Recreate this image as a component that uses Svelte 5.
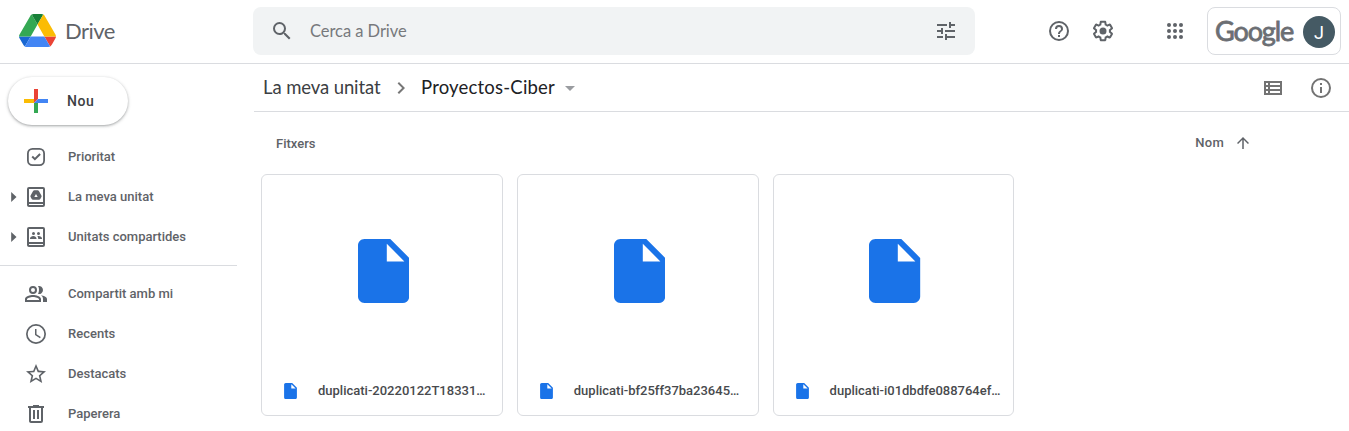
<script>
  const primary = [
    { label: 'Prioritat', icon: 'priority', arrow: false },
    { label: 'La meva unitat', icon: 'drive', arrow: true },
    { label: 'Unitats compartides', icon: 'shared', arrow: true }
  ];
  const secondary = [
    { label: 'Compartit amb mi', icon: 'people' },
    { label: 'Recents', icon: 'clock' },
    { label: 'Destacats', icon: 'star' },
    { label: 'Paperera', icon: 'trash' }
  ];
  const files = ['duplicati-20220122T18331…', 'duplicati-bf25ff37ba23645…', 'duplicati-i01dbdfe088764ef…'];
  const dots = [6, 12, 18];
  const shapes = {
    search: 'M15.5 14h-.79l-.28-.27A6.47 6.47 0 0 0 16 9.5 6.5 6.5 0 1 0 9.5 16c1.61 0 3.09-.59 4.23-1.57l.27.28v.79l5 4.99L20.49 19l-4.99-5zm-6 0a4.5 4.5 0 1 1 0-9 4.5 4.5 0 0 1 0 9z',
    tune: 'M3 17v2h6v-2H3zM3 5v2h10V5H3zm10 16v-2h8v-2h-8v-2h-2v6h2zM7 9v2H3v2h4v2h2V9H7zm14 4v-2H11v2h10zm-6-4h2V7h4V5h-4V3h-2v6z',
    help: 'M11 18h2v-2h-2v2zm1-16a10 10 0 1 0 0 20 10 10 0 0 0 0-20zm0 18a8 8 0 1 1 0-16 8 8 0 0 1 0 16zm0-14a4 4 0 0 0-4 4h2a2 2 0 1 1 4 0c0 2-3 1.75-3 5h2c0-2.25 3-2.5 3-5a4 4 0 0 0-4-4z',
    gear: 'M13.85 22.25h-3.7c-.74 0-1.36-.54-1.45-1.27l-.27-1.89c-.27-.14-.53-.29-.79-.46l-1.8.72c-.7.26-1.47-.03-1.81-.65L2.2 15.53c-.35-.66-.2-1.44.36-1.88l1.53-1.19c-.01-.15-.02-.3-.02-.46 0-.15.01-.31.02-.46l-1.52-1.19c-.59-.45-.74-1.26-.37-1.88l1.85-3.19c.34-.62 1.11-.9 1.79-.63l1.81.73c.26-.17.52-.32.78-.46l.27-1.91c.09-.7.71-1.25 1.44-1.25h3.7c.74 0 1.36.54 1.45 1.27l.27 1.89c.27.14.53.29.79.46l1.8-.72c.71-.26 1.48.03 1.82.65l1.84 3.18c.36.66.2 1.44-.36 1.88l-1.52 1.19c.01.15.02.3.02.46s-.01.31-.02.46l1.52 1.19c.56.45.72 1.23.37 1.86l-1.86 3.22c-.34.62-1.11.9-1.8.63l-1.8-.72c-.26.17-.52.32-.78.46l-.27 1.91c-.1.68-.72 1.22-1.46 1.22zm-3.23-2h2.76l.37-2.55.53-.22c.44-.18.88-.44 1.34-.78l.45-.34 2.38.96 1.38-2.4-2.03-1.58.07-.56c.03-.26.06-.51.06-.78s-.03-.53-.06-.78l-.07-.56 2.03-1.58-1.39-2.4-2.39.96-.45-.35c-.42-.32-.87-.58-1.33-.77l-.52-.22-.37-2.55h-2.76l-.37 2.55-.53.21c-.44.19-.88.44-1.34.79l-.45.33-2.38-.95-1.39 2.39 2.03 1.58-.07.56a7 7 0 0 0-.06.79c0 .26.02.53.06.78l.07.56-2.03 1.58 1.38 2.4 2.39-.96.45.35c.43.33.86.58 1.33.77l.53.22.38 2.55zM12 8.5a3.5 3.5 0 1 0 0 7 3.5 3.5 0 0 0 0-7z',
    list: 'M3 5v14h18V5H3zm4 2v2H5V7h2zm-2 6v-2h2v2H5zm0 2h2v2H5v-2zm14 2H9v-2h10v2zm0-4H9v-2h10v2zm0-4H9V7h10v2z',
    info: 'M11 17h2v-6h-2v6zm1-15a10 10 0 1 0 0 20 10 10 0 0 0 0-20zm0 18a8 8 0 1 1 0-16 8 8 0 0 1 0 16zM11 9h2V7h-2v2z',
    chevron: 'M10 6 8.59 7.41 13.17 12l-4.58 4.59L10 18l6-6z',
    up: 'M4 12l1.41 1.41L11 7.83V20h2V7.83l5.58 5.59L20 12l-8-8-8 8z',
    priority: 'M15.5 3h-7A5.5 5.5 0 0 0 3 8.5v7A5.5 5.5 0 0 0 8.5 21h7a5.5 5.5 0 0 0 5.5-5.5v-7A5.5 5.5 0 0 0 15.5 3zM19.2 15.4a3.8 3.8 0 0 1-3.8 3.8H8.6a3.8 3.8 0 0 1-3.8-3.8V8.6a3.8 3.8 0 0 1 3.8-3.8h6.8a3.8 3.8 0 0 1 3.8 3.8v6.8zM15.4 8.3 10.9 12.8l-2-2-1.4 1.4 3.4 3.4 5.9-5.9z',
    drive: 'M19 2H5a2 2 0 0 0-2 2v16c0 1.1.9 2 2 2h14a2 2 0 0 0 2-2V4a2 2 0 0 0-2-2zm0 18H5v-1h14v1zm0-3H5V4h14v13zM10.4 5.3h3.2c.6 0 1 .2 1.3.7l2.5 4.400c.3.500.3 1 0 1.500l-1.100 2c-.3.500-.7.800-1.300.8H9c-.6 0-1-.3-1.300-.8l-1.100-2c-.3-.5-.3-1 0-1.500L9.100 6c.3-.5.700-.7 1.300-.7zM12 9l-1.700 3h3.400z',
    shared: 'M19 2H5a2 2 0 0 0-2 2v16c0 1.1.9 2 2 2h14a2 2 0 0 0 2-2V4a2 2 0 0 0-2-2zm0 18H5v-1h14v1zm0-3H5V4h14v13zM9.5 10a1.5 1.5 0 1 0 0-3 1.5 1.5 0 0 0 0 3zm5 0a1.5 1.5 0 1 0 0-3 1.5 1.5 0 0 0 0 3zM6 13.5V14h6.5v-.5c0-1.6-1.7-2.5-3.2-2.5S6 11.9 6 13.5zm7.4-2.3c.5.6.8 1.4.8 2.3v.5H18v-.5c0-1.9-2.4-2.8-4.6-2.3z',
    people: 'M9 13c-2.67 0-8 1.34-8 4v3h16v-3c0-2.66-5.33-4-8-4zm6 5H3v-.99C3.2 16.29 6.3 15 9 15s5.8 1.29 6 2v1zM9 12a4 4 0 1 0 0-8 4 4 0 0 0 0 8zm0-6a2 2 0 1 1 0 4 2 2 0 0 1 0-4zm5.04 5.88A4 4 0 1 0 14 4.12 6.5 6.5 0 0 1 15 8c0 1.45-.37 2.8-.96 3.88zM16.97 13.25C18.19 14.13 19 15.32 19 17v3h4v-3c0-2.18-3.58-3.47-6.03-3.75z',
    clock: 'M12 2a10 10 0 1 0 0 20 10 10 0 0 0 0-20zm0 18.3a8.3 8.3 0 1 1 0-16.6 8.3 8.3 0 0 1 0 16.6zM12.5 7H11v6l4.9 3.3.9-1.4-4.3-2.7z',
    star: 'm22 9.24-7.19-.62L12 2 9.19 8.63 2 9.24l5.46 4.73L5.82 21 12 17.27 18.18 21l-1.63-7.03L22 9.24zM12 15.4l-3.76 2.27 1-4.28-3.32-2.88 4.38-.38L12 6.1l1.71 4.04 4.38.38-3.32 2.88 1 4.28L12 15.4z',
    trash: 'M15 4V3H9v1H4v2h1v13c0 1.1.9 2 2 2h10a2 2 0 0 0 2-2V6h1V4h-5zm2 15H7V6h10v13zM9 8h2v9H9zm4 0h2v9h-2z'
  };
</script>

{#snippet icon(name, size = 24)}
  <svg class="icon" width={size} height={size} viewBox="0 0 24 24" aria-hidden="true">
    <path fill-rule="evenodd" d={shapes[name]} />
  </svg>
{/snippet}

{#snippet doc(cls)}
  <svg class={cls} viewBox="0 0 16 20" aria-hidden="true">
    <path fill="#1a73e8" fill-rule="evenodd" d="M10.1 0H2C.9 0 0 .9 0 2v16c0 1.1.9 2 2 2h12c1.1 0 2-.9 2-2V5.9L10.1 0zM9 7V1.5L14.5 7z" />
  </svg>
{/snippet}

<div class="page">
  <header>
    <div class="brand">
      <svg class="logo" width="37" height="33" viewBox="0 0 87.3 78" aria-hidden="true">
        <path d="m6.6 66.85 3.85 6.65c.8 1.4 1.95 2.5 3.3 3.3l13.75-23.8H0c0 1.55.4 3.1 1.2 4.5z" fill="#1967d2" />
        <path d="M43.65 25 29.9 1.2c-1.35.8-2.5 1.9-3.3 3.3l-25.4 44A9.06 9.06 0 0 0 0 53h27.5z" fill="#34a853" />
        <path d="M73.55 76.8c1.35-.8 2.5-1.9 3.3-3.3l1.6-2.75 7.65-13.25c.8-1.4 1.2-2.95 1.2-4.5H59.8z" fill="#ea4335" />
        <path d="M43.65 25 57.4 1.2C56.05.4 54.5 0 52.9 0H34.4c-1.6 0-3.15.45-4.5 1.2z" fill="#188038" />
        <path d="M59.8 53H27.5L13.75 76.8c1.35.8 2.9 1.2 4.5 1.2h50.8c1.6 0 3.15-.45 4.5-1.2z" fill="#4285f4" />
        <path d="m73.4 26.5-12.7-22c-.8-1.4-1.95-2.5-3.3-3.3L43.65 25 59.8 53h27.45c0-1.55-.4-3.1-1.2-4.5z" fill="#fbbc04" />
      </svg>
      <span class="product">Drive</span>
    </div>
    <div class="search">
      {@render icon('search')}
      <span class="placeholder">Cerca a Drive</span>
      {@render icon('tune')}
    </div>
    <div class="tools">
      {@render icon('help')}
      {@render icon('gear')}
      <svg class="icon apps" width="24" height="24" viewBox="0 0 24 24" aria-hidden="true">
        {#each dots as y}{#each dots as x}<circle cx={x} cy={y} r="2" />{/each}{/each}
      </svg>
    </div>
    <div class="account">
      <span class="google">Google</span>
      <span class="avatar">J</span>
    </div>
  </header>

  <div class="body">
    <aside>
      <button class="new">
        <svg width="24" height="24" viewBox="0 0 24 24" aria-hidden="true">
          <path d="M10 0h4v10l-4 4z" fill="#ea4335" />
          <path d="M0 10h10v4H0z" fill="#fbbc04" />
          <path d="M14 10h10v4H10z" fill="#4285f4" />
          <path d="M10 14h4v10h-4z" fill="#34a853" />
        </svg>
        <span>Nou</span>
      </button>
      <nav class="primary">
        {#each primary as item}
          <div class="row">
            <svg class="expand" width="6" height="10" viewBox="0 0 6 10" aria-hidden="true">
              {#if item.arrow}<path d="M.2 0 5.5 5 .2 10z" />{/if}
            </svg>
            {@render icon(item.icon)}
            <span>{item.label}</span>
          </div>
        {/each}
      </nav>
      <nav class="secondary">
        {#each secondary as item}
          <div class="row">
            <span class="expand"></span>
            {@render icon(item.icon)}
            <span>{item.label}</span>
          </div>
        {/each}
      </nav>
    </aside>

    <main>
      <div class="pathbar">
        <span class="crumb">La meva unitat</span>
        {@render icon('chevron')}
        <span class="crumb current">Proyectos-Ciber</span>
        <svg class="caret" width="10" height="5" viewBox="0 0 10 5" aria-hidden="true"><path d="M0 0h10L5 5z" /></svg>
        <div class="views">
          {@render icon('list')}
          {@render icon('info')}
        </div>
      </div>
      <div class="heading">
        <h2>Fitxers</h2>
        <div class="sort"><span>Nom</span>{@render icon('up', 18)}</div>
      </div>
      <div class="grid">
        {#each files as name}
          <article>
            <div class="preview">{@render doc('large')}</div>
            <div class="caption">{@render doc('small')}<span>{name}</span></div>
          </article>
        {/each}
      </div>
    </main>
  </div>
</div>

<style>
  :global(body) { background: #fff; overflow: hidden; }
  .page {
    box-sizing: border-box; width: 1349px; height: 431px; overflow: hidden;
    font: 500 13px/20px Roboto, sans-serif; color: #5f6368;
  }
  svg { display: block; flex: none; }
  .icon { fill: #5f6368; }
  header {
    box-sizing: border-box; height: 64px; border-bottom: 1px solid #dadce0;
    display: flex; align-items: flex-start; padding-top: 7px;
  }
  .brand { width: 253px; height: 48px; box-sizing: border-box; padding-left: 18.5px; display: flex; align-items: center; }
  .logo { margin-bottom: 1px; }
  .product { margin-left: 9.5px; font: 400 22px/28px Lato, sans-serif; letter-spacing: -.5px; }
  .search {
    box-sizing: border-box; width: 722px; height: 48px; border-radius: 8px; background: #f1f3f4;
    display: flex; align-items: center; padding: 0 17px;
  }
  .placeholder { flex: 1; margin: 0 0 1px 16px; font: 400 16.5px/24px Lato, sans-serif; letter-spacing: -.05px; color: #77797c; }
  .tools { height: 48px; margin-left: 72px; display: flex; align-items: center; gap: 20px; }
  .apps { margin-left: 28px; }
  .account {
    box-sizing: border-box; width: 134px; height: 48px; margin-left: 20px; padding: 0 5px 0 7px;
    border: 1px solid #dadce0; border-radius: 8px; display: flex; align-items: center; justify-content: space-between;
  }
  .google {
    margin-bottom: 1px; font: 400 27px/32px Lato, sans-serif; letter-spacing: -1.1px;
    color: #6b6e73; -webkit-text-stroke: .8px #6b6e73;
  }
  .avatar {
    width: 32px; height: 32px; margin-top: 1px; border-radius: 50%; background: #455a64; color: #fff;
    font: 400 18px/33px Roboto, sans-serif; text-align: center;
  }
  .body { display: flex; }
  aside { width: 254px; padding-top: 13px; box-sizing: border-box; }
  .new {
    margin: 0 0 0 8px; width: 120px; height: 48px; border: 0; border-radius: 24px; background: #fff; padding: 0 0 0 16px;
    box-shadow: 0 1px 2px rgba(60, 64, 67, .302), 0 1px 3px 1px rgba(60, 64, 67, .149);
    display: flex; align-items: center; gap: 19px; color: #3c4043;
    font: 500 14px/20px Roboto, sans-serif; letter-spacing: .5px;
  }
  nav { width: 237px; }
  .primary { padding: 12px 0 8px; border-bottom: 1px solid #dadce0; }
  .secondary { padding-top: 8px; }
  .row { height: 40px; display: flex; align-items: center; }
  .expand { width: 6px; margin: 0 7px 0 11px; fill: #5f6368; }
  .row span:last-child { margin-left: 20px; }
  main { flex: 1; }
  .pathbar {
    box-sizing: border-box; height: 48px; border-bottom: 1px solid #dadce0; padding: 0 16px 0 9px;
    display: flex; align-items: center;
  }
  .crumb { width: 118px; margin-bottom: 2px; white-space: nowrap; font: 400 18.5px/24px Lato, sans-serif; letter-spacing: -.1px; color: #3c4043; }
  .crumb + :global(.icon) { margin: 0 8px; fill: #777; }
  .current { width: 134px; letter-spacing: .2px; color: #202124; }
  .caret { margin: 1px 0 0 10px; fill: #9a9ca0; }
  .views { display: flex; gap: 24px; margin-left: auto; }
  .views :global(.icon) { fill: #737373; }
  .heading { height: 62px; display: flex; justify-content: space-between; align-items: center; padding: 0 97px 0 22px; }
  h2 { margin: 2px 0 0; font: inherit; }
  .sort { display: flex; align-items: center; gap: 10px; letter-spacing: .25px; }
  .sort :global(.icon) { margin-bottom: 1px; }
  .grid { display: grid; grid-template-columns: repeat(3, 241.8px); gap: 14px; padding-left: 7px; }
  article { box-sizing: border-box; height: 242px; border: 1px solid #dadce0; border-radius: 6px; }
  .preview { height: 192px; display: flex; align-items: center; justify-content: center; }
  .large { width: 51.2px; height: 64px; margin-left: 3px; }
  .caption { height: 48px; display: flex; align-items: center; padding-left: 22px; color: #484a4d; }
  .small { width: 13px; height: 16px; }
  .caption span { margin-left: 21px; white-space: nowrap; }
</style>
